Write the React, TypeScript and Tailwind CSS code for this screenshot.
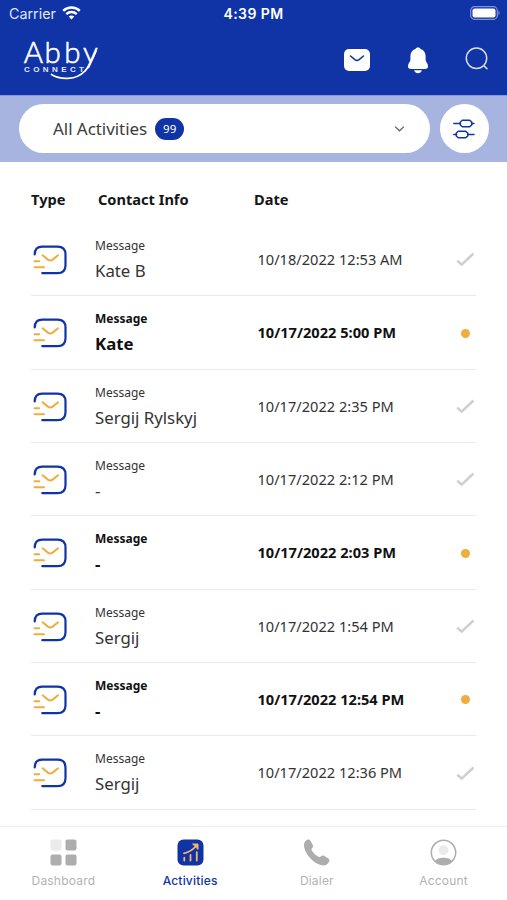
type Activity = {
  name: string;
  date: string;
  unread?: boolean;
};

const activities: Activity[] = [
  { name: "Kate B", date: "10/18/2022 12:53 AM" },
  { name: "Kate", date: "10/17/2022 5:00 PM", unread: true },
  { name: "Sergij Rylskyj", date: "10/17/2022 2:35 PM" },
  { name: "-", date: "10/17/2022 2:12 PM" },
  { name: "-", date: "10/17/2022 2:03 PM", unread: true },
  { name: "Sergij", date: "10/17/2022 1:54 PM" },
  { name: "-", date: "10/17/2022 12:54 PM", unread: true },
  { name: "Sergij", date: "10/17/2022 12:36 PM" },
];

function Logo() {
  return (
    <svg className="overflow-visible" width="80" height="44" viewBox="0 0 80 44" fill="none">
      <text x="1.8 22.6 42.2 61" y="25.3" fontSize="29.5" fontWeight="300" fill="white" stroke="white" strokeWidth="0.6" className="font-['Lato',sans-serif]">
        Abby
      </text>
      <text x="2" y="34.4" fontSize="8" fontWeight="700" textLength="60" fill="#e4e9fa" className="font-['Liberation_Sans',sans-serif]">
        CONNECT
      </text>
      <path d="M29.5 36.5C38 42 54 42.5 63 33C67.5 28.5 70.5 21 74 13" stroke="white" strokeWidth="1.8" strokeLinecap="round" />
    </svg>
  );
}

function StatusBar() {
  return (
    <div className="grid h-7 grid-cols-3 items-center pl-[9px] pr-[6px] font-['Inter',sans-serif] text-sm text-white">
      <div className="flex items-center gap-[6px] text-[14.3px] text-[#dfe5fa]">
        Carrier
        <svg className="-mt-[2px]" width="19" height="14" viewBox="0 0 19 14" fill="none" stroke="white" strokeWidth="2.4">
          <path d="M1.2 4.8C5.8 .3 13.2 .3 17.8 4.8" />
          <path d="M4.3 8.1C7.2 5.3 11.8 5.3 14.7 8.1" />
          <path d="M9.5 13.5L6.7 10.5C8.2 9 10.8 9 12.3 10.5Z" fill="white" stroke="none" />
        </svg>
      </div>
      <div className="-ml-[3px] text-center text-[14px] font-semibold tracking-[0.4px] whitespace-nowrap">4:39 PM</div>
      <svg className="-mt-[2px] ml-auto" width="31" height="14" viewBox="0 0 31 14">
        <rect x=".7" y=".7" width="26.6" height="12.6" rx="3.8" fill="none" stroke="#7f93d8" strokeWidth="1.2" />
        <rect x="2.5" y="2.5" width="23" height="9" rx="2" fill="white" />
        <path d="M28.5 4.5Q30.8 7 28.5 9.5Z" fill="#7f93d8" />
      </svg>
    </div>
  );
}

function Header() {
  return (
    <header className="h-[95px] bg-[#1034a6]">
      <StatusBar />
      <div className="flex h-[64px] items-center justify-between pl-[22px] pr-[17px]">
        <Logo />
        <div className="flex items-center gap-[37px]">
          <svg width="26" height="22" viewBox="0 0 26 22" fill="none">
            <rect width="26" height="22" rx="5" fill="white" />
            <path d="M6.5 7L11.2 10.8Q13 12 14.8 10.8L19.5 7" stroke="#1034a6" strokeWidth="1.6" strokeLinecap="round" />
          </svg>
          <svg width="22" height="27" viewBox="0 0 22 27" fill="white">
            <path d="M11 .5C12.5 .5 13.2 1.1 13.6 2C17 3 18.5 5.8 18.6 9V13C18.8 15 21 16.2 21 19.5C21 21.3 19.5 22 17.8 22H4.2C2.5 22 1 21.3 1 19.5C1 16.2 3.2 15 3.4 13V9C3.5 5.8 5 3 8.4 2C8.8 1.1 9.5 .5 11 .5Z" />
            <path d="M7 23.3H15C14.2 25.3 12.8 26.3 11 26.3S7.8 25.3 7 23.3Z" />
          </svg>
          <svg className="-mt-[2px] -ml-px mr-px" width="24" height="24" viewBox="0 0 24 24" fill="none" stroke="#d5def8" strokeWidth="1.5" strokeLinecap="round">
            <circle cx="11.5" cy="11.3" r="10.2" />
            <path d="M19.6 19.4L22 21.7" />
          </svg>
        </div>
      </div>
    </header>
  );
}

function FilterBar() {
  return (
    <div className="flex h-[67px] items-center gap-[10px] border-t border-[#8299e5] bg-[#a7b4e0] px-[19px] pb-px">
      <button className="flex h-[49px] w-[411px] shrink-0 items-center rounded-full bg-white pl-[34px] pr-[25px] text-[#3c3c3c]">
        <span className="text-[17px] tracking-[-0.05px]">All Activities</span>
        <span className="ml-2 flex h-[22px] w-[29px] items-center justify-center rounded-full bg-[#1034a6] text-[11.5px] text-white">
          99
        </span>
        <svg className="ml-auto" width="11" height="8" viewBox="0 0 11 8" fill="none" stroke="#666" strokeWidth="1.2" strokeLinecap="round">
          <path d="M1.5 2L5.5 5.8L9.5 2" />
        </svg>
      </button>
      <button className="flex h-[49px] w-[49px] shrink-0 items-center justify-center rounded-full bg-white">
        <svg className="-ml-px" width="22" height="20" viewBox="0 0 22 20" fill="none" stroke="#1034a6" strokeWidth="1.5" strokeLinecap="round">
          <path d="M.8 4.5H7M18.5 4.5H21M.8 15.5H3.5M15 15.5H21" />
          <path d="M9.3 1.3H16.7L18.8 3V6L16.7 7.7H9.3L7.3 6V3Z" strokeLinejoin="round" />
          <path d="M5.3 12.3H12.7L14.8 14V17L12.7 18.7H5.3L3.3 17V14Z" strokeLinejoin="round" />
        </svg>
      </button>
    </div>
  );
}

function MessageIcon() {
  return (
    <svg width="34" height="30" viewBox="0 0 34 30" fill="none" strokeWidth="2.2" strokeLinecap="round">
      <path d="M1.7 9.5C1.7 4.3 4.5 1.6 9.3 1.6H24.5C29.8 1.6 32.5 4.3 32.5 9.5V20.2C32.5 25.4 29.8 28.2 24.5 28.2H9.3" stroke="#1034a6" />
      <path d="M9.6 10.3L14.9 14.6Q17.3 16.4 19.7 14.6L25 10.3M1.5 16.3H6.2M1.5 22.2H11" stroke="#f0ad3e" strokeWidth="2" />
    </svg>
  );
}

function ActivityRow({ name, date, unread }: Activity) {
  return (
    <div
      className={`flex h-[73.34px] items-center border-b border-[#e6e8f5] pt-[1.5px] pl-[1.5px] ${
        unread ? "font-bold text-[#111]" : "text-[#333]"
      }`}
    >
      <div className="w-[62.5px]">
        <MessageIcon />
      </div>
      <div className="w-[162.5px]">
        <div className="text-[12px] leading-[18px]">Message</div>
        <div className="mt-1 text-[16.8px] leading-6">{name}</div>
      </div>
      <div className="text-[14.6px] whitespace-nowrap">{date}</div>
      {unread ? (
        <span className="ml-auto mr-[6px] h-[9px] w-[9px] rounded-full bg-[#f0ad3e]" />
      ) : (
        <svg className="ml-auto mr-px" width="19" height="15" viewBox="0 0 19 15" fill="none" stroke="#cfcfcf" strokeWidth="2.6">
          <path d="M1.3 8.7L5.7 12.6L17.5 1.5" />
        </svg>
      )}
    </div>
  );
}

function TabBar() {
  return (
    <nav className="grid h-[74px] grid-cols-4 border-t border-[#ededed] pt-3 text-center font-['Inter',sans-serif] text-[12px] tracking-[0.2px] text-[#b3b3b3]">
      <div className="flex flex-col items-center gap-[6px]">
        <svg width="27" height="27" viewBox="0 0 27 27" fill="#adadad">
          <rect x=".5" y=".5" width="11" height="11" rx="2" fill="#ebebeb" />
          <rect x="15.5" y=".5" width="11" height="11" rx="2" />
          <rect x=".5" y="15.5" width="11" height="11" rx="2" />
          <rect x="15.5" y="15.5" width="11" height="11" rx="2" />
        </svg>
        Dashboard
      </div>
      <div className="flex flex-col items-center gap-[6px] font-medium text-[#1034a6]">
        <svg width="27" height="27" viewBox="0 0 27 27" fill="none" stroke="#f3b76b" strokeWidth="1.8" strokeLinecap="round">
          <rect x=".5" y=".5" width="26" height="26" rx="6" fill="#1034a6" stroke="none" />
          <path d="M7.3 18.7V21.5M13.5 16V21.5M19.8 13.2V21.5" />
          <path d="M7 14.3C12 13.3 16 10.7 19 7" />
          <path d="M16 5H21V10Z" fill="#f3b76b" strokeWidth="1" strokeLinejoin="round" />
        </svg>
        Activities
      </div>
      <div className="flex flex-col items-center gap-[6px]">
        <svg width="27" height="27" viewBox="0 0 27 27" fill="#adadad">
          <path d="M1 5.2C1.2 2.8 3.3 .8 5.2 .6C6.4 .5 7.2 1.2 7.7 2.2L9.8 6C10.4 7.2 10 8.2 9.2 9C8.2 9.9 8.4 10.8 9 11.8C10.8 14.5 13.2 16.8 15.9 18C16.8 18.4 17.4 18 18 17.3C18.8 16.4 20 16.2 21 16.8L25 19.2C26.2 19.9 26.7 20.8 26.3 22C25.5 24.6 23.7 26.2 21 26.4C17.7 26.6 12.4 24.3 8.5 20.5C4 16.2.6 9.8 1 5.2Z" />
        </svg>
        Dialer
      </div>
      <div className="flex flex-col items-center gap-[6px]">
        <svg width="27" height="27" viewBox="0 0 27 27">
          <circle cx="13.5" cy="13.5" r="12.2" fill="none" stroke="#adadad" strokeWidth="1.5" />
          <circle cx="13.5" cy="11.2" r="4.9" fill="#ebebeb" />
          <path d="M5 22.3C6.2 19.8 10 18.8 13.5 18.8S20.8 19.8 22 22.3C17.4 26.7 9.6 26.7 5 22.3Z" fill="#adadad" />
        </svg>
        Account
      </div>
    </nav>
  );
}

export default function App() {
  return (
    <div className="flex h-[900px] w-[507px] flex-col overflow-hidden bg-white font-['Noto_Sans',sans-serif]">
      <Header />
      <FilterBar />
      <main className="h-[664px] px-[31px]">
        <div className="flex h-[61px] items-center pt-[14px] text-[14.6px] font-bold text-[#151515]">
          <div className="w-[67px]">Type</div>
          <div className="w-[156px]">Contact Info</div>
          <div>Date</div>
        </div>
        {activities.map((activity) => (
          <ActivityRow key={activity.date} {...activity} />
        ))}
      </main>
      <TabBar />
    </div>
  );
}
